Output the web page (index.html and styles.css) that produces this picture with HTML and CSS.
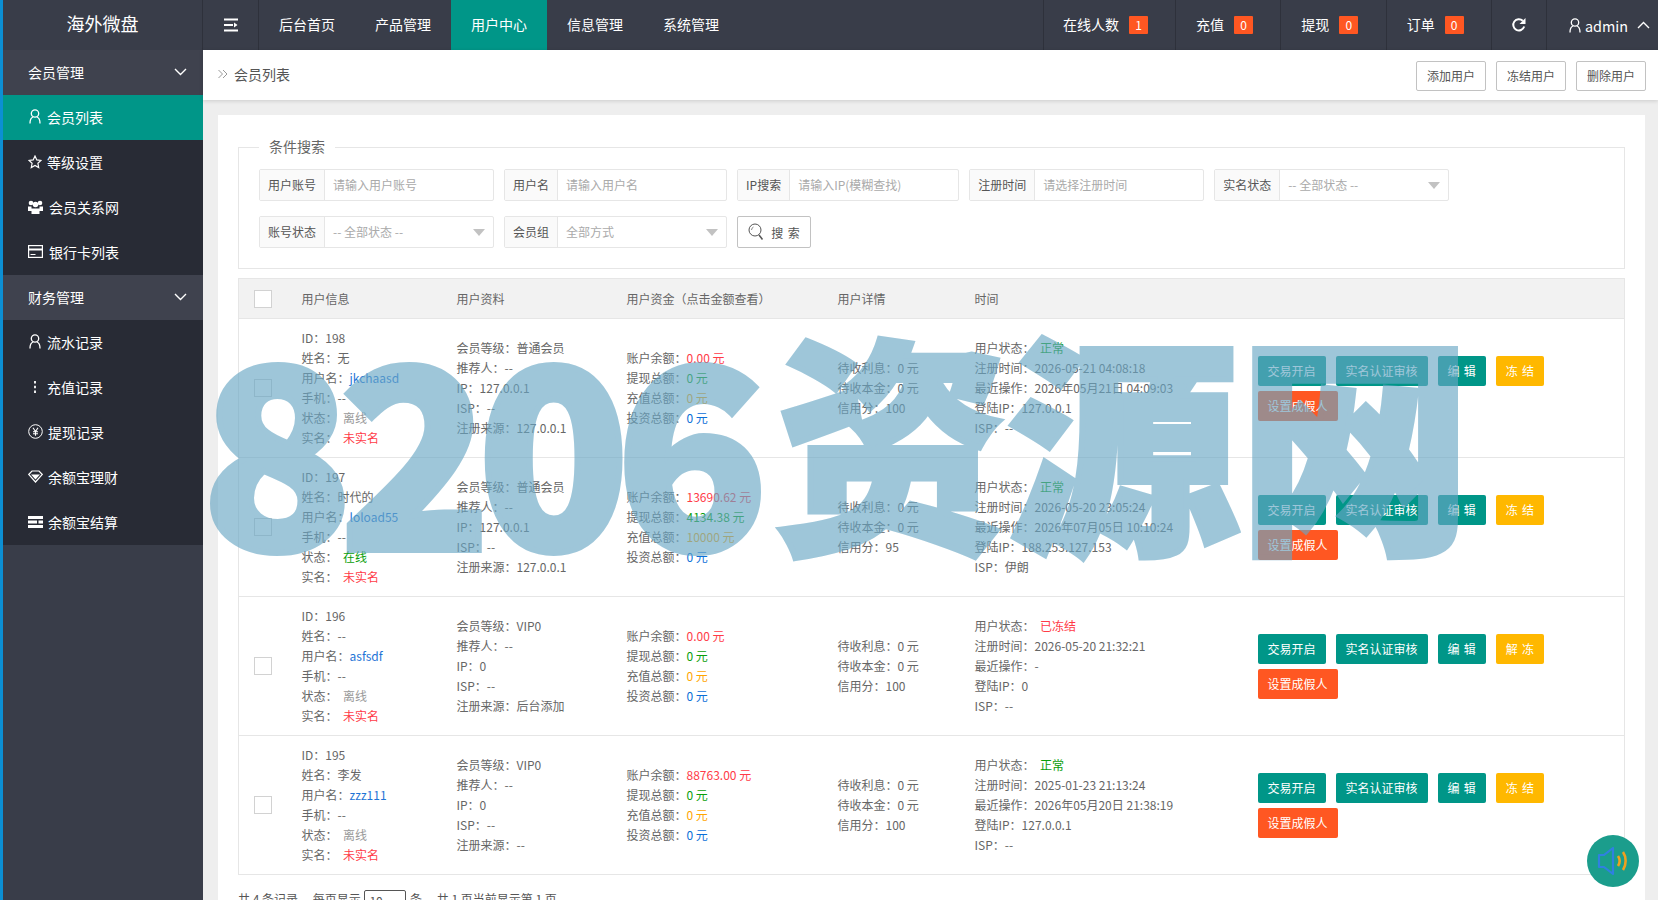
FILE: index.html
```html
<!DOCTYPE html>
<html>
<head>
  <meta charset="utf-8">
  <title>海外微盘 - 会员列表</title>
  <link rel="stylesheet" href="styles.css">
</head>
<body>
  <div class="app">
    <header class="topbar">
      <div class="logo">海外微盘</div>
      <a class="toggle">
        <svg width="14" height="14" viewBox="0 0 14 14"><path d="M0 1.500h14M0 7h9M0 12.500h14" stroke="#fff" stroke-width="2" fill="none"/><path d="M10 4.500l3.500 2.500-3.500 2.500z" fill="#fff"/></svg>
      </a>
      <nav class="mainnav">
        <a>后台首页</a>
        <a>产品管理</a>
        <a class="on">用户中心</a>
        <a>信息管理</a>
        <a>系统管理</a>
      </nav>
      <div class="stats">
        <a class="stat">在线人数<span class="badge">1</span></a>
        <a class="stat">充值<span class="badge">0</span></a>
        <a class="stat">提现<span class="badge">0</span></a>
        <a class="stat">订单<span class="badge">0</span></a>
        <a class="refresh">
          <svg width="16" height="16" viewBox="0 0 16 16"><path d="M13.200 9.500A5.600 5.600 0 1 1 11.800 3.800" stroke="#fff" stroke-width="2" fill="none"/><path d="M14.500 1v6h-6z" fill="#fff"/></svg>
        </a>
        <a class="user">
          <svg width="12" height="15" viewBox="0 0 12 15"><circle cx="6" cy="4.500" r="3.700" stroke="#fff" stroke-width="1.300" fill="none"/><path d="M1 14.500c0-4 1.500-6 3-6.500M11 14.500c0-4-1.500-6-3-6.500" stroke="#fff" stroke-width="1.300" fill="none"/></svg>
          <span>admin</span>
          <svg class="caret" width="13" height="8" viewBox="0 0 13 8"><path d="M1 7l5.500-5.500L12 7" stroke="#fff" stroke-width="1.400" fill="none"/></svg>
        </a>
      </div>
    </header>

    <div class="body">
      <aside class="sidebar">
        <a class="group">会员管理
          <svg width="13" height="8" viewBox="0 0 13 8"><path d="M1 1l5.500 5.500L12 1" stroke="#fff" stroke-width="1.400" fill="none"/></svg>
        </a>
        <div class="sub">
          <a class="on">
            <svg class="ico" width="14" height="15" viewBox="0 0 12 15"><circle cx="6" cy="4.500" r="3.700" stroke="#fff" stroke-width="1.300" fill="none"/><path d="M1 14.500c0-4 1.500-6 3-6.500M11 14.500c0-4-1.500-6-3-6.500" stroke="#fff" stroke-width="1.300" fill="none"/></svg>
            会员列表
          </a>
          <a>
            <svg class="ico" width="14" height="14" viewBox="0 0 14 14"><path d="M7 1l1.800 3.900 4.200.5-3.100 2.900.8 4.200L7 10.400l-3.700 2.100.8-4.200L1 5.400l4.200-.5z" stroke="#fff" stroke-width="1.200" fill="none"/></svg>
            等级设置
          </a>
          <a>
            <svg class="ico" width="15" height="14" viewBox="0 0 15 14"><circle cx="3" cy="3" r="2.300" fill="#fff"/><circle cx="12" cy="3" r="2.300" fill="#fff"/><circle cx="7.500" cy="4.500" r="2.800" fill="#fff"/><path d="M0 6.500h3.500V11H0zM11.500 6.500H15V11h-3.500zM3.500 8.500h8V14h-8z" fill="#fff"/></svg>
            <span class="wide">会员关系网</span>
          </a>
          <a>
            <svg class="ico" width="15" height="13" viewBox="0 0 15 13"><rect x=".6" y=".6" width="13.800" height="11.800" stroke="#fff" stroke-width="1.200" fill="none"/><path d="M1 3.500h13v2H1z" fill="#fff"/><path d="M2.500 9.500h5" stroke="#fff"/></svg>
            <span class="wide">银行卡列表</span>
          </a>
        </div>
        <a class="group">财务管理
          <svg width="13" height="8" viewBox="0 0 13 8"><path d="M1 1l5.500 5.500L12 1" stroke="#fff" stroke-width="1.400" fill="none"/></svg>
        </a>
        <div class="sub">
          <a>
            <svg class="ico" width="14" height="15" viewBox="0 0 12 15"><circle cx="6" cy="4.500" r="3.700" stroke="#fff" stroke-width="1.300" fill="none"/><path d="M1 14.500c0-4 1.500-6 3-6.500M11 14.500c0-4-1.500-6-3-6.500" stroke="#fff" stroke-width="1.300" fill="none"/></svg>
            流水记录
          </a>
          <a>
            <svg class="ico" width="14" height="14" viewBox="0 0 14 14"><path d="M7 1v2.400M7 5.800v2.400M7 10.600V13" stroke="#fff" stroke-width="1.800"/></svg>
            充值记录
          </a>
          <a>
            <svg class="ico" width="15" height="15" viewBox="0 0 15 15"><circle cx="7.500" cy="7.500" r="6.800" stroke="#fff" stroke-width="1" fill="none"/><path d="M5 3.800l2.500 3.700L10 3.800M7.500 7.500v4.200M5 7.800h5M5 9.700h5" stroke="#fff" stroke-width="1.100" fill="none"/></svg>
            提现记录
          </a>
          <a>
            <svg class="ico" width="15" height="13" viewBox="0 0 15 13"><path d="M4 1h7l3.300 3.500L7.500 12 .7 4.500z" stroke="#fff" stroke-width="1.200" fill="none"/><path d="M3 4.500h9L7.500 9.500z" fill="#fff"/></svg>
            余额宝理财
          </a>
          <a>
            <svg class="ico" width="15" height="12" viewBox="0 0 15 12"><path d="M0 0h15v3H0zM0 4.500h9v3H0zM10.500 4.500H15v3h-4.500zM0 9h15v3H0z" fill="#fff"/></svg>
            余额宝结算
          </a>
        </div>
      </aside>

      <main class="main">
        <div class="pagebar">
          <div class="crumb">
            <svg width="10" height="10" viewBox="0 0 10 10"><path d="M.5 1l4 4-4 4M5 1l4 4-4 4" stroke="#999" fill="none"/></svg>
            会员列表
          </div>
          <div class="pagebtns">
            <a class="btn-line">添加用户</a>
            <a class="btn-line">冻结用户</a>
            <a class="btn-line">删除用户</a>
          </div>
        </div>

        <div class="content">
          <div class="card">
            <fieldset class="search">
              <legend>条件搜索</legend>
              <div class="fields">
                <div class="field"><label>用户账号</label><div class="control ph">请输入用户账号</div></div>
                <div class="field"><label>用户名</label><div class="control ph">请输入用户名</div></div>
                <div class="field"><label>IP搜索</label><div class="control ph">请输入IP(模糊查找)</div></div>
                <div class="field"><label>注册时间</label><div class="control ph">请选择注册时间</div></div>
                <div class="field"><label>实名状态</label><div class="control ph pick">-- 全部状态 --</div></div>
              </div>
              <div class="fields">
                <div class="field"><label>账号状态</label><div class="control ph pick">-- 全部状态 --</div></div>
                <div class="field"><label>会员组</label><div class="control ph pick">全部方式</div></div>
                <a class="btn-search">
                  <svg width="16" height="18" viewBox="0 0 16 18"><circle cx="7" cy="7" r="6" stroke="#555" stroke-width="1" fill="none"/><path d="M3.500 7a3.500 3.500 0 0 1 2-3" stroke="#888" fill="none"/><path d="M11 12l3.500 4.500" stroke="#555" stroke-width="1.500"/></svg>
                  <span>搜 索</span>
                </a>
              </div>
            </fieldset>

            <table class="users">
              <colgroup>
                <col class="c-check"><col class="c-info"><col class="c-data"><col class="c-money"><col class="c-detail"><col class="c-time"><col>
              </colgroup>
              <thead>
                <tr>
                  <th><i class="check"></i></th>
                  <th>用户信息</th>
                  <th>用户资料</th>
                  <th>用户资金（点击金额查看）</th>
                  <th>用户详情</th>
                  <th>时间</th>
                  <th></th>
                </tr>
              </thead>
              <tbody>
                <tr>
                  <td><i class="check"></i></td>
                  <td>ID：198<br>姓名：无<br>用户名：<a class="link">jkchaasd</a><br>手机：--<br>状态：&nbsp;&nbsp;<span class="grey">离线</span><br>实名：&nbsp;&nbsp;<span class="red">未实名</span></td>
                  <td>会员等级：普通会员<br>推荐人：--<br>IP：127.0.0.1<br>ISP：--<br>注册来源：127.0.0.1</td>
                  <td>账户余额：<span class="red">0.00 元</span><br>提现总额：<span class="green">0 元</span><br>充值总额：<span class="orange">0 元</span><br>投资总额：<span class="blue">0 元</span></td>
                  <td>待收利息：0 元<br>待收本金：0 元<br>信用分：100</td>
                  <td>用户状态：&nbsp;&nbsp;<span class="green">正常</span><br>注册时间：2026-05-21 04:08:18<br>最近操作：2026年05月21日 04:09:03<br>登陆IP：127.0.0.1<br>ISP：--</td>
                  <td><div class="ops"><a class="op">交易开启</a><a class="op">实名认证审核</a><a class="op">编 辑</a><a class="op warm">冻 结</a><a class="op hot">设置成假人</a></div></td>
                </tr>
                <tr>
                  <td><i class="check"></i></td>
                  <td>ID：197<br>姓名：时代的<br>用户名：<a class="link">loload55</a><br>手机：--<br>状态：&nbsp;&nbsp;<span class="green">在线</span><br>实名：&nbsp;&nbsp;<span class="red">未实名</span></td>
                  <td>会员等级：普通会员<br>推荐人：--<br>IP：127.0.0.1<br>ISP：--<br>注册来源：127.0.0.1</td>
                  <td>账户余额：<span class="red">13690.62 元</span><br>提现总额：<span class="green">4134.38 元</span><br>充值总额：<span class="orange">10000 元</span><br>投资总额：<span class="blue">0 元</span></td>
                  <td>待收利息：0 元<br>待收本金：0 元<br>信用分：95</td>
                  <td>用户状态：&nbsp;&nbsp;<span class="green">正常</span><br>注册时间：2026-05-20 23:05:24<br>最近操作：2026年07月05日 10:10:24<br>登陆IP：188.253.127.153<br>ISP：伊朗</td>
                  <td><div class="ops"><a class="op">交易开启</a><a class="op">实名认证审核</a><a class="op">编 辑</a><a class="op warm">冻 结</a><a class="op hot">设置成假人</a></div></td>
                </tr>
                <tr>
                  <td><i class="check"></i></td>
                  <td>ID：196<br>姓名：--<br>用户名：<a class="link">asfsdf</a><br>手机：--<br>状态：&nbsp;&nbsp;<span class="grey">离线</span><br>实名：&nbsp;&nbsp;<span class="red">未实名</span></td>
                  <td>会员等级：VIP0<br>推荐人：--<br>IP：0<br>ISP：--<br>注册来源：后台添加</td>
                  <td>账户余额：<span class="red">0.00 元</span><br>提现总额：<span class="green">0 元</span><br>充值总额：<span class="orange">0 元</span><br>投资总额：<span class="blue">0 元</span></td>
                  <td>待收利息：0 元<br>待收本金：0 元<br>信用分：100</td>
                  <td>用户状态：&nbsp;&nbsp;<span class="red">已冻结</span><br>注册时间：2026-05-20 21:32:21<br>最近操作：-<br>登陆IP：0<br>ISP：--</td>
                  <td><div class="ops"><a class="op">交易开启</a><a class="op">实名认证审核</a><a class="op">编 辑</a><a class="op warm">解 冻</a><a class="op hot">设置成假人</a></div></td>
                </tr>
                <tr>
                  <td><i class="check"></i></td>
                  <td>ID：195<br>姓名：李发<br>用户名：<a class="link">zzz111</a><br>手机：--<br>状态：&nbsp;&nbsp;<span class="grey">离线</span><br>实名：&nbsp;&nbsp;<span class="red">未实名</span></td>
                  <td>会员等级：VIP0<br>推荐人：--<br>IP：0<br>ISP：--<br>注册来源：--</td>
                  <td>账户余额：<span class="red">88763.00 元</span><br>提现总额：<span class="green">0 元</span><br>充值总额：<span class="orange">0 元</span><br>投资总额：<span class="blue">0 元</span></td>
                  <td>待收利息：0 元<br>待收本金：0 元<br>信用分：100</td>
                  <td>用户状态：&nbsp;&nbsp;<span class="green">正常</span><br>注册时间：2025-01-23 21:13:24<br>最近操作：2026年05月20日 21:38:19<br>登陆IP：127.0.0.1<br>ISP：--</td>
                  <td><div class="ops"><a class="op">交易开启</a><a class="op">实名认证审核</a><a class="op">编 辑</a><a class="op warm">冻 结</a><a class="op hot">设置成假人</a></div></td>
                </tr>
              </tbody>
            </table>

            <div class="pager">共 4 条记录， 每页显示 <span class="pagesize">10 <b>⌄</b></span> 条， 共 1 页当前显示第 1 页</div>
          </div>
        </div>
      </main>
    </div>
  </div>

  <div class="watermark"><span class="wm-num">8206</span><span class="wm-cn">资源网</span></div>

  <a class="voice">
    <svg width="34" height="30" viewBox="0 0 34 30"><path d="M3 9h5l9-7v26l-9-7H3z" stroke="#2f80e0" stroke-width="2.200" fill="none" stroke-linejoin="round"/><path d="M22 10c2 3 2 7 0 10" stroke="#f0a020" stroke-width="2.600" fill="none"/><path d="M27 6c3.500 5 3.500 13 0 18" stroke="#f0a020" stroke-width="2.600" fill="none"/></svg>
  </a>
</body>
</html>
```

FILE: styles.css
```css
html, body {
  margin: 0;
  height: 100%;
  overflow: hidden;
}
body {
  font-family: "Noto Sans CJK SC", "Noto Sans", sans-serif;
  font-size: 12px;
  color: #666;
  background: #eee;
}
a {
  color: inherit;
  text-decoration: none;
  cursor: pointer;
}

.app {
  display: flex;
  flex-direction: column;
  height: 900px;
  border-left: 3px solid #0c8fd3;
  box-sizing: border-box;
}

/* top bar */
.topbar {
  display: flex;
  flex: none;
  height: 50px;
  background: #393d49;
  color: #fff;
  font-size: 14px;
}
.logo {
  width: 200px;
  box-sizing: border-box;
  border-right: 1px solid #2e313b;
  text-align: center;
  font-size: 18px;
  line-height: 46px;
}
.toggle {
  display: flex;
  align-items: center;
  justify-content: center;
  width: 56px;
  border-right: 1px solid #2e313b;
  box-sizing: border-box;
}
.mainnav {
  display: flex;
}
.mainnav a {
  padding: 0 20px;
  width: 56px;
  line-height: 48px;
  text-align: center;
  white-space: nowrap;
}
.mainnav a.on {
  background: #009688;
}
.stats {
  display: flex;
  margin-left: auto;
}
.stat {
  display: flex;
  align-items: center;
  gap: 10px;
  padding: 0 20px 2px;
  width: 64.33px;
  border-left: 1px solid #2e313b;
}
.stat:first-child {
  padding-left: 19px;
  width: 92px;
}
.badge {
  width: 19px;
  height: 18px;
  margin-top: 2px;
  border-radius: 1px;
  background: #ff5722;
  font-size: 12px;
  line-height: 18px;
  text-align: center;
}
.refresh {
  display: flex;
  align-items: center;
  justify-content: center;
  width: 55px;
  padding-right: 1px;
  box-sizing: border-box;
  border-left: 1px solid #2e313b;
}
.user {
  display: flex;
  align-items: center;
  gap: 4px;
  width: 112px;
  padding-left: 22px;
  box-sizing: border-box;
  border-left: 1px solid #2e313b;
  font-size: 14.4px;
}
.caret {
  margin-left: 5px;
}

.body {
  display: flex;
  flex: 1;
  min-height: 0;
}

/* left menu */
.sidebar {
  flex: none;
  width: 200px;
  background: #393d49;
  color: #fff;
  font-size: 14px;
}
.group {
  display: flex;
  align-items: center;
  justify-content: space-between;
  height: 45px;
  box-sizing: border-box;
  padding: 0 16px 2px 25px;
  background: #3f424e;
}
.sub {
  background: #282b35;
}
.sub a {
  display: flex;
  align-items: center;
  height: 45px;
  box-sizing: border-box;
  padding: 0 0 2px 25px;
}
.sub a.on {
  background: #009688;
}
.ico {
  flex: none;
  margin-right: 5px;
}
.wide {
  margin-left: 1px;
}

/* page */
.main {
  display: flex;
  flex-direction: column;
  flex: 1;
  min-width: 0;
}
.pagebar {
  display: flex;
  flex: none;
  align-items: center;
  justify-content: space-between;
  height: 50px;
  padding: 0 12px 0 15px;
  background: #fff;
  box-shadow: 0 1px 4px rgba(0, 0, 0, .15);
  position: relative;
}
.crumb {
  display: flex;
  align-items: center;
  gap: 6px;
  padding-bottom: 2px;
  font-size: 14px;
  color: #555;
}
.pagebtns {
  display: flex;
  gap: 10px;
  margin-top: 2px;
}
.btn-line {
  width: 68px;
  height: 28px;
  border: 1px solid #c2c2c2;
  border-radius: 2px;
  line-height: 28px;
  text-align: center;
  color: #555;
}
.content {
  flex: 1;
  min-height: 0;
  overflow: hidden;
  padding: 15px 13px 0 15px;
}
.card {
  padding: 22px 20px 0;
  height: 800px;
  background: #fff;
}

/* search form */
.search {
  margin: 0;
  padding: 12px 20px 0;
  height: 132px;
  box-sizing: border-box;
  border: 1px solid #e6e6e6;
}
.search legend {
  margin-left: 0;
  padding: 0 10px 2px;
  font-size: 14px;
  line-height: 18px;
  color: #666;
}
.fields {
  display: flex;
  gap: 10px;
  margin-bottom: 15px;
}
.field {
  display: flex;
  height: 32px;
  box-sizing: border-box;
  border: 1px solid #e6e6e6;
  border-radius: 2px;
  line-height: 30px;
}
.field label {
  padding: 0 8px;
  background: #fafafa;
  border-right: 1px solid #e6e6e6;
  color: #555;
}
.control {
  position: relative;
  width: 160px;
  padding-left: 8px;
}
.ph {
  color: #aaa;
}
.pick:after {
  content: "";
  position: absolute;
  right: 8px;
  top: 12px;
  border: 6px solid transparent;
  border-top: 7px solid #c2c2c2;
  border-bottom: 0;
}
.btn-search {
  display: flex;
  align-items: center;
  justify-content: center;
  gap: 7px;
  width: 72px;
  height: 30px;
  border: 1px solid #c2c2c2;
  border-radius: 2px;
  color: #555;
  word-spacing: 2px;
}

/* list table */
.users {
  width: 100%;
  margin-top: 9px;
  table-layout: fixed;
  border-collapse: collapse;
  border: 1px solid #e6e6e6;
  line-height: 20px;
}
.c-check { width: 48px; }
.c-info { width: 155px; }
.c-data { width: 170px; }
.c-money { width: 211px; }
.c-detail { width: 137px; }
.c-time { width: 283px; }
.users th {
  height: 39px;
  padding: 0 15px;
  background: #f2f2f2;
  font-weight: normal;
  text-align: left;
}
.users td {
  height: 138px;
  box-sizing: border-box;
  padding: 9px 15px;
  border-top: 1px solid #e6e6e6;
  white-space: nowrap;
}
.check {
  display: block;
  width: 16px;
  height: 16px;
  background: #fff;
  border: 1px solid #d2d2d2;
}
.link { color: #1e74d6; }
.grey { color: #999; }
.red { color: #ff3b47; }
.green { color: #0a9e0a; }
.orange { color: #ffa500; }
.blue { color: #0b6fd8; }
.ops {
  display: flex;
  flex-wrap: wrap;
  gap: 5px 10px;
}
.op {
  height: 30px;
  padding: 0 10px;
  border-radius: 2px;
  background: #009688;
  color: #fff;
  line-height: 30px;
  word-spacing: 1.5px;
}
.op.warm { background: #ffb800; }
.op.hot { background: #ff5722; }

.pager {
  margin-top: 12px;
  line-height: 24px;
  color: #555;
}
.pagesize {
  display: inline-block;
  width: 42px;
  height: 22px;
  margin: 0 1px;
  padding-left: 4px;
  box-sizing: border-box;
  border: 1px solid #555;
  border-radius: 2px;
  line-height: 20px;
  vertical-align: middle;
}
.pagesize b {
  margin-left: 6px;
  font-weight: normal;
}

/* overlays */
.watermark {
  position: absolute;
  left: 201px;
  top: 264px;
  display: flex;
  align-items: flex-start;
  line-height: 340px;
  font-weight: 900;
  white-space: nowrap;
  color: rgb(105, 167, 197);
  opacity: .64;
  -webkit-text-stroke: 6px rgb(105, 167, 197);
  pointer-events: none;
}
.wm-num {
  margin-top: 7px;
  font-size: 250px;
  letter-spacing: -14px;
}
.wm-cn {
  margin-left: 21px;
  font-size: 232px;
}
.voice {
  position: absolute;
  left: 1587px;
  top: 835px;
  display: flex;
  align-items: center;
  justify-content: center;
  width: 52px;
  height: 52px;
  border-radius: 50%;
  background: #1b9d8c;
}
```
